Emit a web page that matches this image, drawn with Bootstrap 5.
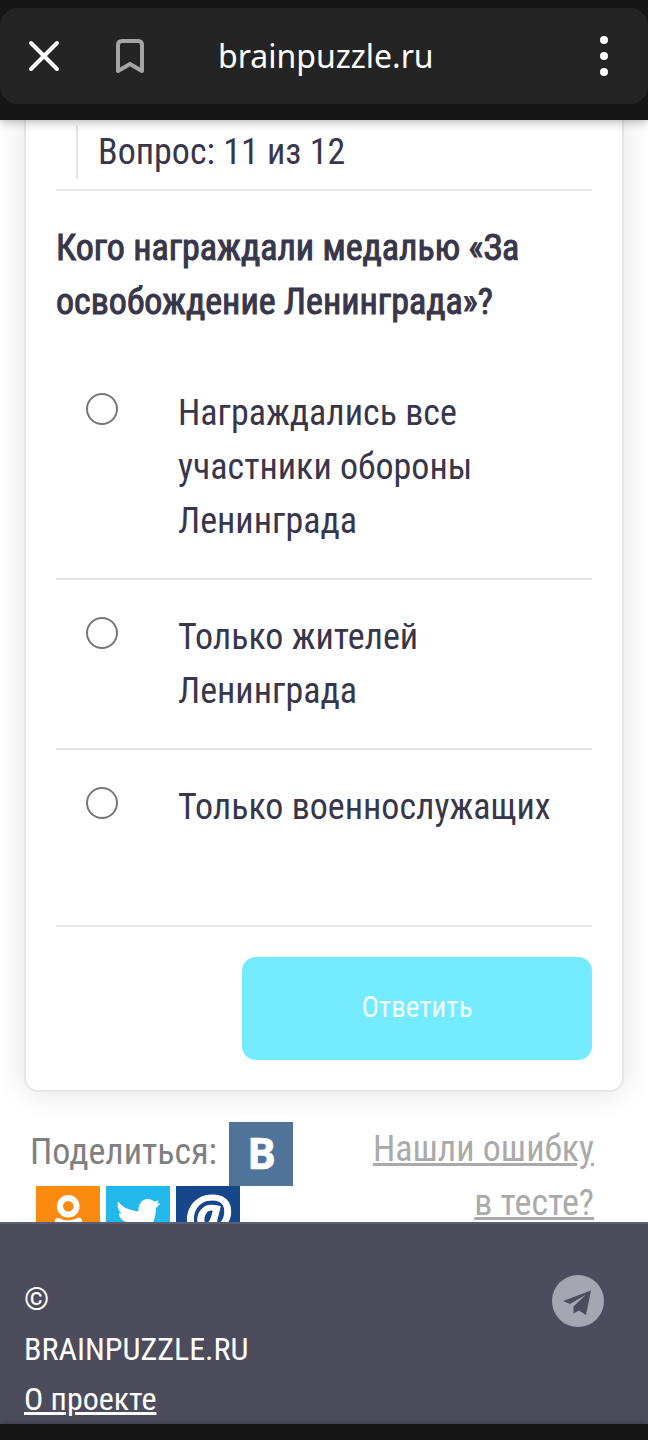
<!DOCTYPE html>
<html lang="ru">
<head>
<meta charset="utf-8">
<meta name="viewport" content="width=device-width, initial-scale=1">
<title>brainpuzzle.ru</title>
<link rel="stylesheet" href="https://cdn.jsdelivr.net/npm/bootstrap@5.3.0/dist/css/bootstrap.min.css">
<style>
  body { font-family: "Roboto Condensed", "Liberation Sans Narrow", Roboto, sans-serif; font-size: 36px; line-height: 54px; color: #38364a; background: #fff; }
  .browser-bar { background: #161616; padding: 8px 0 16px; box-shadow: 0 2px 10px rgba(0,0,0,.3); z-index: 2; }
  .address { background: #242424; border-radius: 18px; height: 96px; padding: 0 24px; color: #fff; }
  .address button { line-height: 1; }
  .host { font: 32px/40px "Noto Sans", sans-serif; }
  .host-slot { padding-left: 70px; }
  .page-view { flex: 1 1 0; min-height: 0; }
  .quiz { margin: 0 24px; padding: 5px 30px 30px; border: 2px solid #e6e6e6; border-top: 0; border-radius: 0 0 14px 14px; box-shadow: 0 0 30px rgba(0,0,0,.12); background: #fff; }
  .counter-row { padding: 0 20px 10px; border-bottom: 2px solid #e6e6e6; }
  .counter { border-left: 2px solid #e6e6e6; padding-left: 20px; }
  .question { font-size: 36px; line-height: 54px; font-weight: 400; -webkit-text-stroke: 1px #38364a; margin: 30px 0 27px; }
  .answer { padding: 30px 0 30px 30px; border-bottom: 2px solid #e6e6e6; gap: 60px; }
  .answers { margin-bottom: 30px; }
  .answer:last-child { padding-bottom: 91px; }
  .answer input { appearance: none; width: 32px; height: 32px; border: 2px solid #767676; border-radius: 50%; margin: 7px 0 0; background: #fff; }
  .answer input:checked { background: #38364a; box-shadow: inset 0 0 0 6px #fff; }
  .send { width: 350px; height: 103px; padding: 0 0 2px; border-radius: 14px; font-size: 29px; color: #f2ffff; background: #74ebff; }
  .share { padding: 30px 54px 0 30px; color: #808080; }
  .share-links { flex: 0 1 274px; }
  .share-links svg, .plane svg { display: block; }
  .share-label { padding: 0 12px 4px 0; }
  .more { gap: 6px; padding-left: 6px; }
  .report { color: #aaa; width: 240px; }
  .site-footer { background: #4c4c5c; border-top: 2px solid #5c5f6e; color: #fff; font-size: 32px; line-height: 50px; padding: 50px 44px 0 24px; }
  .site-footer nav { width: 240px; }
  .system-bar { height: 16px; background: #161616; box-shadow: 0 0 8px rgba(0,0,0,.3); }
</style>
</head>
<body class="d-flex flex-column vh-100 overflow-hidden">
<header class="browser-bar position-relative flex-shrink-0">
  <div class="address d-flex align-items-center">
    <button class="btn p-0 border-0" type="button" aria-label="Закрыть">
      <svg width="40" height="40" viewBox="0 0 40 40" fill="none" stroke="#fff" stroke-width="4" stroke-linecap="round"><path d="M7 7 33 33M33 7 7 33"/></svg>
    </button>
    <button class="btn p-0 border-0 ms-5" type="button" aria-label="В закладки">
      <svg width="36" height="40" viewBox="0 0 36 40" fill="none" stroke="#a5a5a5" stroke-width="4" stroke-linejoin="round"><path d="M6 35V9Q6 5 10 5H26Q30 5 30 9V35L18 28Z"/></svg>
    </button>
    <div class="host-slot flex-grow-1"><span class="host">brainpuzzle.ru</span></div>
    <button class="btn p-0 border-0" type="button" aria-label="Меню">
      <svg width="40" height="40" viewBox="0 0 40 40" fill="#fff"><circle cx="20" cy="4" r="4"/><circle cx="20" cy="20" r="4"/><circle cx="20" cy="36" r="4"/></svg>
    </button>
  </div>
</header>

<main class="page-view overflow-hidden">
  <form class="quiz">
    <div class="counter-row"><div class="counter">Вопрос: 11 из 12</div></div>
    <h1 class="question">Кого награждали медалью «За освобождение Ленинграда»?</h1>
    <div class="answers">
      <div class="answer d-flex align-items-start">
        <input class="flex-shrink-0" type="radio" name="answer" id="a1"><label for="a1">Награждались все участники обороны Ленинграда</label>
      </div>
      <div class="answer d-flex align-items-start">
        <input class="flex-shrink-0" type="radio" name="answer" id="a2"><label for="a2">Только жителей Ленинграда</label>
      </div>
      <div class="answer d-flex align-items-start">
        <input class="flex-shrink-0" type="radio" name="answer" id="a3"><label for="a3">Только военнослужащих</label>
      </div>
    </div>
    <div class="d-flex justify-content-end"><button class="btn border-0 send" type="submit">Ответить</button></div>
  </form>
  <div class="share d-flex justify-content-between align-items-start">
    <div class="share-links">
      <div class="d-flex align-items-center"><span class="share-label">Поделиться:</span>
        <a href="#" aria-label="ВКонтакте"><svg width="64" height="64" viewBox="0 0 64 64"><path fill="#50739a" d="M0 0h64v64H0z"/><text x="18" y="47" fill="#fff" stroke="#fff" stroke-width=".5" font-family="Open Sans, sans-serif" font-weight="700" font-size="43">В</text></svg></a>
      </div>
      <div class="more d-flex">
        <a href="#" aria-label="Одноклассники"><svg width="64" height="64" viewBox="0 0 64 64"><path fill="#fb8a10" d="M0 0h64v64H0z"/><g fill="none" stroke="#fff" stroke-width="6" stroke-linecap="round"><circle cx="32.300" cy="20.300" r="8.300"/><path d="M22 34.800Q32 40 43 34.800M32 41 22 52M32 41 42 52"/></g></svg></a>
        <a href="#" aria-label="Twitter"><svg width="64" height="64" viewBox="0 0 64 64"><path fill="#22b8ec" d="M0 0h64v64H0z"/><path fill="#fff" d="M12 15.500C17 22 24 24 32.500 25.500 32 18 36 13 42 13 44.500 13 46.500 14 48 15.500L53 14.500 51 17.500 54.500 17.500 50 22C50 38 41 50 26 50 20 50 15 48 12 46 18 46 22 44 24 42 20 41 17 39 16 36H20C15 34 13 31 13 27L16 28C12 25 11 20 12 15.500Z"/></svg></a>
        <a href="#" aria-label="Mail.ru"><svg width="64" height="64" viewBox="0 0 64 64"><path fill="#16478a" d="M0 0h64v64H0z"/><text x="32" y="48" text-anchor="middle" fill="#fff" stroke="#fff" font-family="Open Sans, sans-serif" font-style="italic" font-weight="700" font-size="54">@</text></svg></a>
      </div>
    </div>
    <a class="report text-end" href="#">Нашли ошибку в тесте?</a>
  </div>
</main>

<footer class="site-footer flex-shrink-0 d-flex justify-content-between align-items-start">
  <nav>
    <div>© BRAINPUZZLE.RU</div>
    <a class="text-white" href="#">О проекте</a>
  </nav>
  <a class="plane" href="#" aria-label="Telegram"><svg width="52" height="54" viewBox="0 0 52 54"><circle cx="26" cy="27" r="26" fill="#a6a6b2"/><path fill="#4c4c5c" d="M11 27 39 16.500 34 41 27 36.500 21.500 39.500 21.500 32.500 34 20.500 18 30Z"/></svg></a>
</footer>
<div class="system-bar flex-shrink-0"></div>
<script src="https://cdn.jsdelivr.net/npm/bootstrap@5.3.0/dist/js/bootstrap.bundle.min.js"></script>
</body>
</html>
